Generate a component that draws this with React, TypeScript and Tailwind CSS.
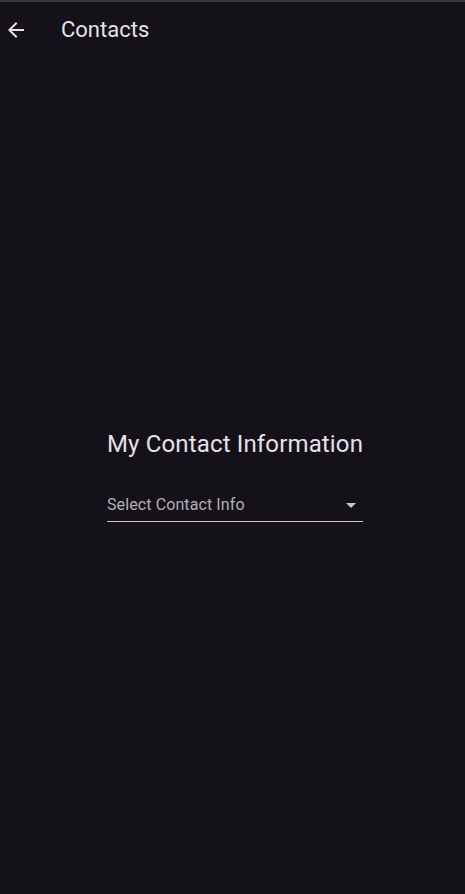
export default function App() {
  return (
    <div
      className="flex h-[894px] w-[465px] flex-col overflow-hidden border-t-2 border-[#3a383d] bg-[#141218] text-[#e6e0e9]"
      style={{ fontFamily: 'Roboto, "Noto Sans", sans-serif' }}
    >
      <header className="flex h-[56px] items-center">
        <button className="ml-[4px] flex h-[24px] w-[24px] items-center justify-center">
          <svg width="24" height="24" viewBox="0 0 24 24">
            <path d="M20 11H7.83l5.59-5.59L12 4l-8 8 8 8 1.41-1.41L7.83 13H20v-2z" fill="#e6e0e9" />
          </svg>
        </button>
        <h1 className="ml-[33px] text-[22px] leading-none">Contacts</h1>
      </header>

      <main className="flex flex-1 items-center justify-center pb-[1px] pl-[5px]">
        <div className="w-[256px]">
          <h2 className="whitespace-nowrap text-[24px] leading-[28px] tracking-[0.15px] text-[#e6e0e9]">
            My Contact Information
          </h2>
          <div className="mt-[37px] flex items-center justify-between border-b border-[#cac4d0] pb-[6px]">
            <span className="whitespace-nowrap text-[16px] leading-[20px] tracking-[0.1px] text-[#b3aeb7]">
              Select Contact Info
            </span>
            <svg width="24" height="24" viewBox="0 0 24 24" className="-my-[2px]">
              <path d="M7 10l5 5 5-5z" fill="#cac4d0" />
            </svg>
          </div>
        </div>
      </main>
    </div>
  );
}
